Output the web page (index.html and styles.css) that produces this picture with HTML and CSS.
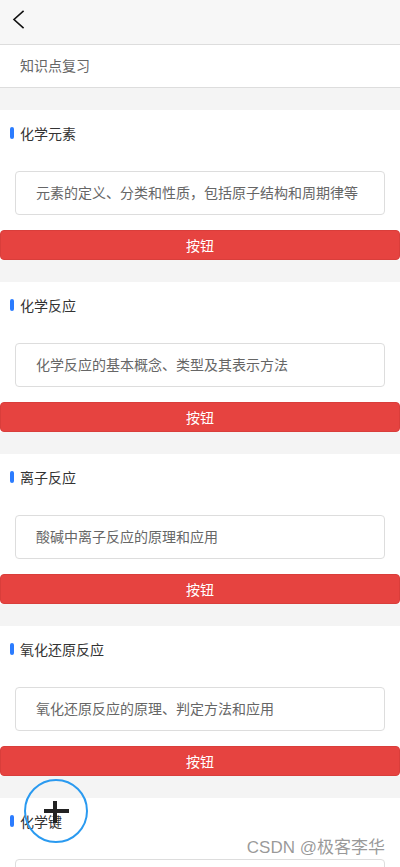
FILE: index.html
```html
<!DOCTYPE html>
<html lang="zh">
<head>
<meta charset="utf-8">
<title>知识点复习</title>
<link rel="stylesheet" href="styles.css">
</head>
<body>
<div class="page">
  <header class="nav">
    <svg class="back" width="24" height="24" viewBox="0 0 24 24"><path d="M13 1.5 L4 9.5 L13 17.5" fill="none" stroke="#111" stroke-width="1.6" stroke-linecap="square"/></svg>
  </header>
  <div class="search">知识点复习</div>

  <section class="card">
    <h2 class="title">化学元素</h2>
    <div class="desc">元素的定义、分类和性质，包括原子结构和周期律等</div>
    <button class="btn">按钮</button>
  </section>
  <section class="card">
    <h2 class="title">化学反应</h2>
    <div class="desc">化学反应的基本概念、类型及其表示方法</div>
    <button class="btn">按钮</button>
  </section>
  <section class="card">
    <h2 class="title">离子反应</h2>
    <div class="desc">酸碱中离子反应的原理和应用</div>
    <button class="btn">按钮</button>
  </section>
  <section class="card">
    <h2 class="title">氧化还原反应</h2>
    <div class="desc">氧化还原反应的原理、判定方法和应用</div>
    <button class="btn">按钮</button>
  </section>
  <section class="card">
    <h2 class="title">化学键</h2>
    <div class="desc">化学键的类型、形成及其性质</div>
    <button class="btn">按钮</button>
  </section>
</div>
<div class="fab"></div>
<div class="watermark">CSDN @极客李华</div>
</body>
</html>
```
FILE: styles.css
```css
* { box-sizing: border-box; }
html, body { margin: 0; padding: 0; }
body {
  background: #f4f4f4;
  font-family: "Noto Sans CJK SC", "Noto Sans", sans-serif;
  font-size: 14px;
  color: #333;
  overflow: hidden;
  height: 867px;
}
.nav {
  height: 44px;
  background: #f7f7f7;
  display: flex;
  align-items: center;
  padding-left: 10px;
}
.back { display: block; }
.search {
  height: 44px;
  background: #fff;
  border-top: 1px solid #ddd;
  border-bottom: 1px solid #ddd;
  padding-left: 20px;
  line-height: 40px;
  color: #666;
  font-size: 14px;
  margin-bottom: 22px;
}
.card {
  background: #fff;
  height: 150px;
  margin-bottom: 22px;
  display: flex;
  flex-direction: column;
}
.title {
  margin: 0;
  height: 46px;
  display: flex;
  align-items: center;
  padding-left: 10px;
  padding-bottom: 1px;
  font-size: 14px;
  font-weight: normal;
  color: #333;
}
.title::before {
  content: "";
  width: 4px;
  height: 12px;
  border-radius: 2px;
  background: #2b7cff;
  margin-right: 6px;
  margin-top: 1px;
}
.desc {
  margin: 15px 15px 0;
  height: 44px;
  border: 1px solid #ddd;
  border-radius: 4px;
  padding-left: 20px;
  line-height: 41px;
  color: #666;
  font-size: 14px;
  white-space: nowrap;
  overflow: hidden;
}
.btn {
  margin-top: 15px;
  height: 30px;
  width: 100%;
  border: 1px solid #d93e3b;
  border-radius: 4px;
  background: #e64340;
  color: #fff;
  font-family: inherit;
  font-size: 14px;
  line-height: 26px;
  padding: 0;
}
.fab {
  position: absolute;
  left: 24px;
  top: 779px;
  width: 64px;
  height: 64px;
  border: 2px solid #2a9af0;
  border-radius: 50%;
}
.fab::before, .fab::after {
  content: "";
  position: absolute;
  background: #222;
}
.fab::before {
  left: 18px;
  top: 28px;
  width: 25px;
  height: 4px;
}
.fab::after {
  left: 27px;
  top: 20px;
  width: 4px;
  height: 22px;
}
.watermark {
  position: absolute;
  right: 15px;
  top: 837px;
  font-family: "Liberation Sans", "Noto Sans CJK SC", sans-serif;
  font-size: 17px;
  line-height: 22px;
  color: rgba(120, 120, 120, 0.75);
}
```
